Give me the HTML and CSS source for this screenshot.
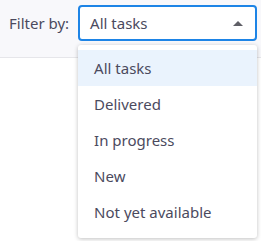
FILE: index.html
```html
<!DOCTYPE html>
<html lang="en">
<head>
    <meta charset="UTF-8">
    <meta name="viewport" content="width=device-width, initial-scale=1.0">
    <title>Filter</title>
    <link rel="stylesheet" href="styles.css">
</head>
<body>
    <div class="toolbar">
        <label class="filter-label">Filter by:</label>
        <div class="filter-select">
            <div class="select-box">
                <span>All tasks</span>
                <span class="caret"></span>
            </div>
            <ul class="select-menu">
                <li class="active">All tasks</li>
                <li>Delivered</li>
                <li>In progress</li>
                <li>New</li>
                <li>Not yet available</li>
            </ul>
        </div>
    </div>
    <div class="content"></div>
</body>
</html>
```
FILE: styles.css
```css
* {
    margin: 0;
    padding: 0;
    box-sizing: border-box;
}

html, body {
    height: 100%;
}

body {
    font-family: "Noto Sans", "Open Sans", sans-serif;
    font-size: 15px;
    color: #4b4a5e;
    background-color: #fff;
}

.toolbar {
    position: relative;
    z-index: 2;
    display: flex;
    align-items: flex-start;
    height: 58px;
    padding: 5px 4px 0 9px;
    background-color: #f8f8fb;
    border-bottom: 1px solid #e6e6ea;
}

.filter-label {
    line-height: 36px;
    margin-right: 9px;
}

.filter-select {
    position: relative;
    flex: 1;
}

.select-box {
    display: flex;
    align-items: center;
    justify-content: space-between;
    height: 36px;
    padding: 0 12px 0 10px;
    background-color: #fff;
    border: 2px solid #1d84e6;
    border-radius: 4px;
}

.caret {
    width: 0;
    height: 0;
    border-left: 5px solid transparent;
    border-right: 5px solid transparent;
    border-bottom: 5px solid #5f5f66;
}

.select-menu {
    position: absolute;
    z-index: 10;
    top: 40px;
    left: 0;
    right: 0;
    padding: 5px 0 8px;
    list-style-type: none;
    background-color: #fff;
    border-radius: 3px;
    box-shadow: 0 1px 4px rgba(0, 0, 0, 0.25);
}

.select-menu li {
    height: 36px;
    line-height: 36px;
    padding: 0 16px;
}

.select-menu li.active {
    background-color: #eaf3fd;
}

.content {
    height: calc(100% - 58px);
}
```
